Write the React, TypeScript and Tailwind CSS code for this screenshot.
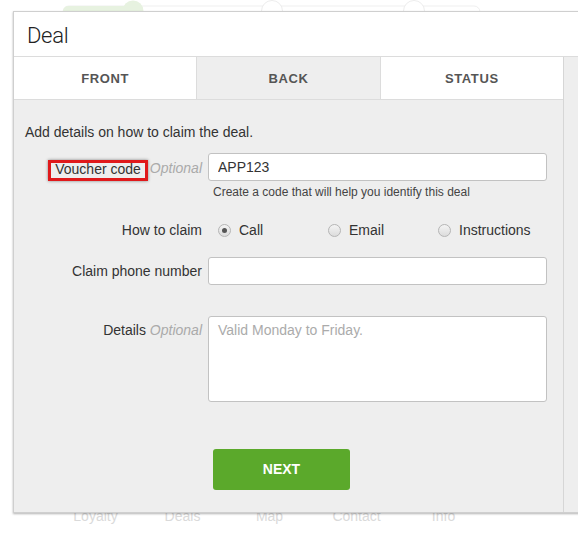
import React from 'react';

const tabs = [
  { label: 'FRONT', active: false },
  { label: 'BACK', active: true },
  { label: 'STATUS', active: false },
];

const claimOptions = [
  { label: 'Call', checked: true },
  { label: 'Email', checked: false },
  { label: 'Instructions', checked: false },
];

const navLinks = ['Loyalty', 'Deals', 'Map', 'Contact', 'Info'];

const Radio: React.FC<{ checked: boolean }> = ({ checked }) => (
  <span className="w-[13px] h-[13px] rounded-full border border-[#b5b5b5] bg-gradient-to-b from-[#f4f4f4] to-[#dcdcdc] flex items-center justify-center shrink-0">
    {checked && <span className="w-[5px] h-[5px] rounded-full bg-[#555]" />}
  </span>
);

const StepTrack: React.FC = () => (
  <svg width="578" height="11" viewBox="0 0 578 11" className="block">
    <rect x="63" y="6" width="417" height="20" rx="6" fill="#fff" stroke="#efefef" />
    <rect x="63" y="6" width="72" height="20" rx="5" fill="#e7f2e0" />
    <circle cx="133" cy="11" r="10.5" fill="#e7f2e0" />
    <circle cx="272" cy="11" r="10.5" fill="#fff" stroke="#ededed" />
    <circle cx="414" cy="11" r="10.5" fill="#fff" stroke="#ededed" />
  </svg>
);

export default function App() {
  return (
    <div className="relative w-[578px] h-[533px] overflow-hidden bg-white font-['Liberation_Sans',Arial,sans-serif]">
      {/* page behind the modal */}
      <div className="h-full flex flex-col">
        <StepTrack />
        <div className="flex-1" />
        <nav className="flex pl-[52px] mb-[7px] text-[14px] leading-5 text-[#dadada]">
          {navLinks.map((l) => (
            <span key={l} className="w-[87px] text-center">{l}</span>
          ))}
        </nav>
      </div>

      {/* modal */}
      <div className="absolute left-[13px] top-[11px] w-[600px] h-[502px] border border-[#cfcfcf] bg-[#eeeeee] shadow-[0_1px_2px_rgba(0,0,0,0.3)] flex flex-col">
        <div className="h-[45px] bg-white border-b border-[#dcdcdc] flex items-center pl-[13px] pt-[3px]">
          <h1 className="font-['Roboto',sans-serif] font-light text-[22px] text-[#222] tracking-[-0.3px]">Deal</h1>
        </div>

        <div className="flex-1 flex">
          <div className="w-[550px] border-r border-[#d6d6d6] flex flex-col">
            <div className="flex h-[43px]">
              {tabs.map((t, i) => (
                <div
                  key={t.label}
                  className={`flex-1 flex items-center justify-center border-b border-[#dcdcdc] text-[13px] font-bold tracking-[0.6px] text-[#555] pt-[1px] ${
                    t.active ? 'bg-[#eeeeee]' : 'bg-white'
                  } ${i > 0 ? 'border-l' : ''}`}
                >
                  {t.label}
                </div>
              ))}
            </div>

            <div className="flex flex-col pt-[22px] pr-[16px] text-[14px] text-[#333]">
              <p className="pl-[11px] leading-5">Add details on how to claim the deal.</p>

              <div className="grid grid-cols-[188px_1fr] gap-x-[6px] mt-[11px]">
                <div className="flex items-end justify-end gap-[2px]">
                  <span className="border-[3px] border-[#e0191b] px-[4px] pb-[2px] leading-[13px] shadow-[0_0_3px_rgba(0,0,0,0.45)]">
                    Voucher code
                  </span>
                  <span className="italic text-[#aaa] pb-[6px] leading-[14px]">Optional</span>
                </div>
                <input
                  readOnly
                  defaultValue="APP123"
                  className="h-[28px] w-full bg-white border border-[#c2c2c2] rounded-[3px] px-[9px] text-[14px] text-[#333] outline-none"
                />
                <div />
                <p className="text-[12px] leading-4 text-[#444] pl-[5px] mt-[3px]">
                  Create a code that will help you identify this deal
                </p>
              </div>

              <div className="grid grid-cols-[188px_1fr] gap-x-[6px] mt-[19px] h-[20px]">
                <span className="text-right leading-5 pt-[1px]">How to claim</span>
                <div className="flex pl-[10px]">
                  {claimOptions.map((o) => (
                    <label key={o.label} className="w-[110px] flex items-center gap-[8px] leading-5 pt-[1px]">
                      <Radio checked={o.checked} />
                      <span>{o.label}</span>
                    </label>
                  ))}
                </div>
              </div>

              <div className="grid grid-cols-[188px_1fr] gap-x-[6px] mt-[18px] items-center">
                <span className="text-right leading-5">Claim phone number</span>
                <input
                  readOnly
                  className="h-[28px] w-full bg-white border border-[#c2c2c2] rounded-[3px] px-[9px] outline-none"
                />
              </div>

              <div className="grid grid-cols-[188px_1fr] gap-x-[6px] mt-[31px]">
                <span className="text-right leading-5 pt-[4px]">
                  Details <span className="italic text-[#aaa]">Optional</span>
                </span>
                <textarea
                  readOnly
                  placeholder="Valid Monday to Friday."
                  className="h-[86px] w-full resize-none bg-white border border-[#c2c2c2] rounded-[3px] px-[9px] py-[3px] leading-5 text-[14px] placeholder:text-[#ababab] outline-none"
                />
              </div>

              <div className="mt-[47px] pl-[199px]">
                <button className="w-[137px] h-[41px] rounded-[3px] bg-[#5ba92b] text-white text-[14px] font-bold">
                  NEXT
                </button>
              </div>
            </div>
          </div>
          <div className="flex-1" />
        </div>
      </div>
    </div>
  );
}
